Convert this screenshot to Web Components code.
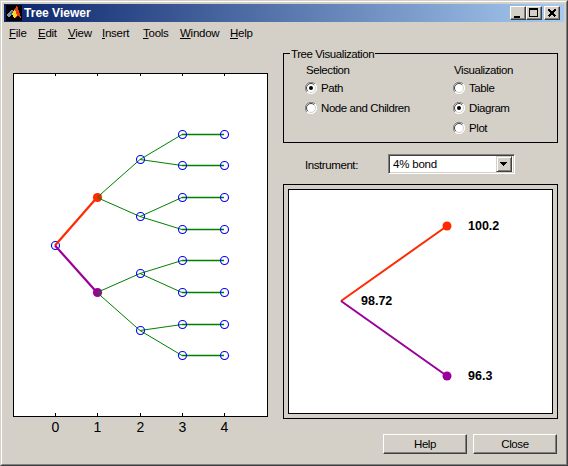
<!doctype html>
<html><head><meta charset="utf-8">
<style>html,body{margin:0;padding:0;background:#d4d0c8}body{width:568px;height:466px;overflow:hidden;font-family:"Liberation Sans",Arial,sans-serif}</style>
</head><body>
<tree-viewer>
  <win-titlebar slot="title">Tree Viewer</win-titlebar>
  <win-menubar slot="menu">
    <menu-item w="29" k="F" r="ile"></menu-item><menu-item w="30" k="E" r="dit"></menu-item><menu-item w="34" k="V" r="iew"></menu-item><menu-item w="41" k="I" r="nsert"></menu-item><menu-item w="37" k="T" r="ools"></menu-item><menu-item w="50" k="W" r="indow"></menu-item><menu-item w="30" k="H" r="elp"></menu-item>
  </win-menubar>
  <tree-plot slot="left"></tree-plot>
  <viz-panel slot="right" legend="Tree Visualization">
    <radio-group slot="a" heading="Selection">
      <x-radio checked>Path</x-radio><x-radio>Node and Children</x-radio>
    </radio-group>
    <radio-group slot="b" heading="Visualization">
      <x-radio>Table</x-radio><x-radio checked>Diagram</x-radio><x-radio>Plot</x-radio>
    </radio-group>
  </viz-panel>
  <instrument-row slot="right" label="Instrument:" value="4% bond"></instrument-row>
  <path-diagram slot="right"></path-diagram>
  <button-row slot="right"><x-button>Help</x-button><x-button>Close</x-button></button-row>
</tree-viewer>
<script>
function def(name, css, html, init){
  customElements.define(name, class extends HTMLElement{
    connectedCallback(){
      if(this.shadowRoot) return;
      const s=this.attachShadow({mode:'open'});
      const h=typeof html==='function'?html(this):html;
      s.innerHTML='<style>'+css+'</style>'+h;
      if(init) init(s,this);
    }
  });
}
const FONT='"Liberation Sans",Arial,sans-serif';
const TXT=`font:11.5px ${FONT};letter-spacing:-.42px;`;
def('tree-viewer',`
 :host{display:block;width:568px;height:466px;box-sizing:border-box;background:#d4d0c8;color:#000;font:12px ${FONT};
   border-top:1px solid #d4d0c8;border-left:1px solid #d4d0c8;border-right:1px solid #404040;border-bottom:1px solid #404040}
 .in{box-sizing:border-box;height:100%;border-top:1px solid #fff;border-left:1px solid #fff;border-right:1px solid #808080;border-bottom:1px solid #808080;padding:2px 2px 0 2px;display:flex;flex-direction:column}
 .main{flex:1;display:flex;padding:11px 0 0 9px;min-height:0}
 .l{width:270px;padding-top:20px;flex:none}
 .r{width:275px;flex:none;display:flex;flex-direction:column}
`,`<div class="in"><slot name="title"></slot><slot name="menu"></slot>
 <div class="main"><div class="l"><slot name="left"></slot></div><div class="r"><slot name="right"></slot></div></div></div>`);

def('win-titlebar',`
 :host{display:flex;align-items:center;height:18px;background:linear-gradient(90deg,#0a246a,#a6caf0);color:#fff;font:bold 12px ${FONT};flex:none}
 svg.i{margin:0 2px 0 2px;flex:none}
 .t{flex:1;letter-spacing:.02px}
 .b{display:flex;margin-right:4px}
 .w{width:16px;height:14px;box-sizing:border-box;background:#d4d0c8;border:1px solid;border-color:#fff #404040 #404040 #fff;box-shadow:inset -1px -1px 0 #808080;display:block}
 .w.x{margin-left:2px}
`,`<svg class="i" width="16" height="16" viewBox="0 0 16 16" shape-rendering="crispEdges">
  <rect width="16" height="16" fill="#000"/>
  <path d="M0 10 L6 5 L8 7 L3 12 Z" fill="#8a94a8"/>
  <path d="M4 8 L7 5 L8 8 L5 10 Z" fill="#2f5f96"/>
  <path d="M6 9 L11 0 L16 15 L12 11 L9 13 Z" fill="#e83a10"/>
  <path d="M6 9 L9 4 L11 10 L8 13 Z" fill="#ffd820"/>
 </svg><span class="t"><slot></slot></span>
 <span class="b">
  <span class="w"><svg width="14" height="12" viewBox="0 0 14 12" shape-rendering="crispEdges"><rect x="3" y="9" width="6" height="2" fill="#000"/></svg></span>
  <span class="w"><svg width="14" height="12" viewBox="0 0 14 12" shape-rendering="crispEdges"><path d="M2 1h9v9h-9z M3 3v6h7v-6z" fill="#000" fill-rule="evenodd"/></svg></span>
  <span class="w x"><svg width="14" height="12" viewBox="0 0 14 12" shape-rendering="crispEdges"><path d="M3.5 2.5 L10.5 9.5 M10.5 2.5 L3.5 9.5" stroke="#000" stroke-width="1.6"/></svg></span>
 </span>`);

def('win-menubar',`:host{display:flex;height:20px;align-items:center;padding-left:5px;flex:none}`,`<slot></slot>`);
def('menu-item',`:host{display:block;${TXT}box-sizing:border-box;padding-top:1px;letter-spacing:-.25px} u{text-decoration:underline}`,
 el=>`<u>${el.getAttribute('k')}</u>${el.getAttribute('r')}`,
 (s,el)=>{el.style.width=el.getAttribute('w')+'px'});

def('tree-plot',`:host{display:block;width:270px;height:370px}svg{display:block}text{font:14px ${FONT};fill:#000}`,()=>{
  const nx=[42,84,127,169,211];
  const Y=o=>o-73;
  const L2=[159,216,273,330], L3=[134,165,197,229,260,292,324,355];
  let g='';
  const line=(x1,y1,x2,y2,c,w)=>`<line x1="${x1}" y1="${Y(y1)+.5}" x2="${x2}" y2="${Y(y2)+.5}" stroke="${c}" stroke-width="${w}"/>`;
  [197,292].forEach((y,i)=>{[0,1].forEach(j=>{g+=line(84,y,127,L2[i*2+j],'#008000',1)})});
  L2.forEach((y,i)=>{[0,1].forEach(j=>{const t=L3[i*2+j];g+=line(127,y,169,t,'#008000',1);g+=line(169,t,211,t,'#008000',1.3)})});
  let c='';
  const ci=(x,y)=>`<circle cx="${x+.5}" cy="${Y(y)+.5}" r="4" fill="none" stroke="#0000ff" stroke-width="1.1"/>`;
  c+=ci(42,245);L2.forEach(y=>c+=ci(127,y));L3.forEach(y=>{c+=ci(169,y)+ci(211,y)});
  const thick=line(42,245,84,197,'#ff2a00',2.2)+line(42,245,84,292,'#990099',2.2);
  const dots=`<circle cx="84.5" cy="${Y(197)+.5}" r="4.6" fill="#ff2a00"/><circle cx="84.5" cy="${Y(292)+.5}" r="4.6" fill="#990099"/>`
   +`<path d="M84.5 ${Y(197)+.5}l4 -3.5M84.5 ${Y(197)+.5}l4 2M84.5 ${Y(292)+.5}l4 -2M84.5 ${Y(292)+.5}l4 3.5" stroke="#008000" fill="none"/>`;
  let ticks='',labels='';
  nx.forEach((x,i)=>{ticks+=`<path d="M${x+.5} 0v3M${x+.5} 343v-3"/>`;labels+=`<text x="${x+.5}" y="359" text-anchor="middle">${i}</text>`});
  return `<svg width="270" height="370" viewBox="0 0 270 370">
   <rect x=".5" y=".5" width="254" height="343" fill="#fff" stroke="#000" shape-rendering="crispEdges"/>
   <g stroke="#000" shape-rendering="crispEdges">${ticks}</g>
   ${g}${c}${thick}${dots}${labels}</svg>`;
});

def('viz-panel',`
 :host{display:block;position:relative;box-sizing:border-box;height:90px;width:275px;border:1px solid #000;flex:none}
 .lg{position:absolute;left:6px;top:-7px;background:#d4d0c8;padding:0 1px;${TXT}line-height:14px}
 .c{display:flex;padding:9px 0 0 21px}
 .a{width:148px;flex:none}
`,el=>`<span class="lg">${el.getAttribute('legend')}</span><div class="c"><div class="a"><slot name="a"></slot></div><div><slot name="b"></slot></div></div>`);

def('radio-group',`
 :host{display:block;${TXT}}
 .h{height:14px;line-height:14px;margin-bottom:1px;padding-left:1px}
 .l{display:flex;flex-direction:column}
`,el=>`<div class="h">${el.getAttribute('heading')}</div><div class="l"><slot></slot></div>`);

def('x-radio',`
 :host{display:flex;align-items:center;height:20px;${TXT}}
 svg{margin-right:4px;flex:none;display:block}
`,el=>`<svg width="12" height="12" viewBox="0 0 12 12">
  <circle cx="6" cy="6" r="5.5" fill="#fff"/>
  <path d="M1.9 10.1A5.8 5.8 0 0 1 10.1 1.9" fill="none" stroke="#808080" stroke-width="1"/>
  <path d="M2.8 9.2A4.5 4.5 0 0 1 9.2 2.8" fill="none" stroke="#404040" stroke-width="1"/>
  <path d="M10.1 1.9A5.8 5.8 0 0 1 1.9 10.1" fill="none" stroke="#fff" stroke-width="1"/>
  <path d="M9.2 2.8A4.5 4.5 0 0 1 2.8 9.2" fill="none" stroke="#d4d0c8" stroke-width="1"/>
  ${el.hasAttribute('checked')?'<circle cx="6" cy="6" r="2" fill="#000"/>':''}
 </svg><span><slot></slot></span>`);

def('instrument-row',`
 :host{display:flex;align-items:center;height:20px;margin-top:11px;padding-left:22px;flex:none;${TXT}}
 .lb{width:83px;flex:none;padding-top:2px}
 .s{width:127px;height:20px;box-sizing:border-box;background:#fff;border:1px solid;border-color:#808080 #fff #fff #808080;box-shadow:inset 1px 1px 0 #404040,inset -1px -1px 0 #d4d0c8;display:flex;align-items:center;padding:2px;}
 .v{flex:1;padding-left:2px;letter-spacing:-.2px}
 .b{width:16px;height:16px;box-sizing:border-box;background:#d4d0c8;border:1px solid;border-color:#d4d0c8 #404040 #404040 #d4d0c8;box-shadow:inset 1px 1px 0 #fff,inset -1px -1px 0 #808080;display:flex;align-items:center;justify-content:center}
`,el=>`<span class="lb">${el.getAttribute('label')}</span><div class="s"><span class="v">${el.getAttribute('value')}</span><span class="b"><svg width="8" height="5" viewBox="0 0 8 5" shape-rendering="crispEdges"><path d="M0 0h7v1h-1v1h-1v1h-1v1h-1v-1h-1v-1h-1v-1h-1z" fill="#000"/></svg></span></div>`);

def('path-diagram',`
 :host{display:block;box-sizing:border-box;width:275px;height:235px;border:1px solid #000;padding:4px;margin-top:10px;flex:none}
 svg{display:block}text{font:bold 12.5px ${FONT};fill:#000}
`,`<svg width="265" height="225" viewBox="0 0 265 225">
  <rect x=".5" y=".5" width="264" height="224" fill="#fff" stroke="#000" shape-rendering="crispEdges"/>
  <line x1="53" y1="112" x2="159" y2="37" stroke="#ff2a00" stroke-width="2"/>
  <line x1="53" y1="112" x2="159" y2="187" stroke="#990099" stroke-width="2"/>
  <circle cx="159" cy="37" r="4.5" fill="#ff2a00"/>
  <circle cx="159" cy="187" r="4.5" fill="#990099"/>
  <text x="180" y="41">100.2</text>
  <text x="73" y="116">98.72</text>
  <text x="180" y="191">96.3</text>
 </svg>`);

def('button-row',`:host{display:flex;justify-content:flex-end;gap:6px;margin-top:15px;padding-right:1px;flex:none}`,`<slot></slot>`);
def('x-button',`
 :host{display:flex;align-items:center;justify-content:center;width:84px;height:20px;box-sizing:border-box;background:#d4d0c8;${TXT}
  border:1px solid;border-color:#fff #404040 #404040 #fff;box-shadow:inset -1px -1px 0 #808080}
`,`<slot></slot>`);
</script>
</body></html>
